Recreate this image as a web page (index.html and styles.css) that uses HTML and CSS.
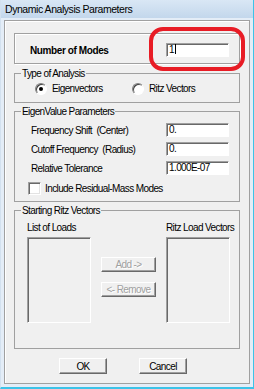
FILE: index.html
```html
<!DOCTYPE html>
<html>
  <head>
    <title>Dynamic Analysis Parameters</title>
    <link rel="stylesheet" href="styles.css">
  </head>
  <body>
    <div class="window">
      <div class="title-bar">Dynamic Analysis Parameters</div>
      <div class="client">
        <div class="frame">

          <div class="modes-box">
            <span class="modes-label">Number of Modes</span>
            <div class="field">1<span class="caret"></span></div>
          </div>

          <fieldset class="group">
            <legend>Type of Analysis</legend>
            <div class="radio-row">
              <label class="radio-item"><span class="radio checked"></span>Eigenvectors</label>
              <label class="radio-item"><span class="radio"></span>Ritz Vectors</label>
            </div>
          </fieldset>

          <fieldset class="group">
            <legend>EigenValue Parameters</legend>
            <div class="param-row">
              <span>Frequency Shift&nbsp; (Center)</span>
              <div class="field">0.</div>
            </div>
            <div class="param-row">
              <span>Cutoff Frequency&nbsp; (Radius)</span>
              <div class="field">0.</div>
            </div>
            <div class="param-row">
              <span>Relative Tolerance</span>
              <div class="field">1.000E-07</div>
            </div>
            <label class="check-row"><span class="checkbox"></span>Include Residual-Mass Modes</label>
          </fieldset>

          <fieldset class="group">
            <legend>Starting Ritz Vectors</legend>
            <div class="ritz-body">
              <div class="ritz-col">
                <span class="ritz-head">List of Loads</span>
                <div class="list"></div>
              </div>
              <div class="ritz-buttons">
                <button class="btn small" disabled>Add -&gt;</button>
                <button class="btn small" disabled>&lt;- Remove</button>
              </div>
              <div class="ritz-col">
                <span class="ritz-head">Ritz Load Vectors</span>
                <div class="list"></div>
              </div>
            </div>
          </fieldset>

          <div class="footer">
            <button class="btn main">OK</button>
            <button class="btn main">Cancel</button>
          </div>

        </div>
      </div>
      <div class="highlight"></div>
    </div>
  </body>
</html>
```
FILE: styles.css
```css
body{
  margin: 0;
  background-color: #f0f0f0;
  font-family: "Liberation Sans", Arial, sans-serif;
  font-size: 10px;
  letter-spacing: -0.6px;
  color: black;
}
.window{
  position: relative;
  width: 254px;
  height: 389px;
  box-sizing: border-box;
  background-color: #f0f0f0;
  border-left: 1px solid #d3e1ef;
  border-right: 1px solid #3cc3e8;
  border-bottom: 2px solid #3cc3e8;
}
.title-bar{
  height: 18px;
  line-height: 19px;
  padding-left: 4px;
  font-size: 10.5px;
  letter-spacing: -0.45px;
  background: linear-gradient(#d9e7f5, #c3d7ec);
}
.client{
  padding: 2px 3px 3px 3px;
  background-color: #e4edf7;
}
.frame{
  height: 364px;
  box-sizing: border-box;
  border: 1px solid #a0a0a0;
  box-shadow: inset 1px 1px 0 #fff;
  background-color: #f0f0f0;
  padding: 12px 9px 0 9px;
}

/* number of modes */
.modes-box{
  display: flex;
  align-items: center;
  justify-content: space-between;
  height: 31px;
  box-sizing: border-box;
  padding: 3px 10px 0 15px;
  border: 1px solid #a0a0a0;
  box-shadow: inset 1px 1px 0 #fff, 1px 1px 0 #fff;
}
.modes-label{
  font-weight: bold;
  letter-spacing: -0.4px;
}
.field{
  width: 63px;
  height: 14px;
  box-sizing: border-box;
  background-color: white;
  border: 1px solid;
  border-color: #a0a0a0 #fff #fff #a0a0a0;
  box-shadow: inset 1px 1px 0 #696969;
  padding-left: 2px;
  line-height: 12px;
  white-space: nowrap;
}
.caret{
  display: inline-block;
  width: 1px;
  height: 10px;
  margin-left: 1px;
  background-color: black;
  vertical-align: -1px;
}

/* group boxes */
.group{
  margin: 3px 0 0 0;
  padding: 0;
  border: 1px solid #a0a0a0;
  min-width: 0;
}
.group + .group{
  margin-top: 2px;
}
.group legend{
  margin-left: 6px;
  padding: 0 1px;
  line-height: 13px;
}

.radio-row{
  display: flex;
  align-items: center;
  height: 13px;
  margin: 2px 0 7px 20px;
}
.radio-item{
  display: flex;
  align-items: center;
  gap: 5px;
  width: 97px;
}
.radio{
  position: relative;
  width: 12px;
  height: 12px;
  box-sizing: border-box;
  border-radius: 50%;
  background-color: white;
  border: 1px solid;
  border-color: #808080 #fff #fff #808080;
  box-shadow: inset 1px 1px 0 #404040;
}
.radio.checked::after{
  content: "";
  position: absolute;
  left: 3px;
  top: 3px;
  width: 4px;
  height: 4px;
  border-radius: 50%;
  background-color: black;
}

.param-row{
  display: flex;
  align-items: center;
  justify-content: space-between;
  height: 14px;
  margin: 5px 10px 0 16px;
}
.check-row{
  display: flex;
  align-items: center;
  gap: 4px;
  height: 13px;
  margin: 7px 0 6px 13px;
}
.checkbox{
  width: 13px;
  height: 13px;
  box-sizing: border-box;
  background-color: white;
  border: 1px solid;
  border-color: #a0a0a0 #fff #fff #a0a0a0;
  box-shadow: inset 1px 1px 0 #696969, inset -1px -1px 0 #e3e3e3;
}

/* ritz vectors */
.ritz-body{
  display: flex;
  gap: 10px;
  margin: 4px 0 25px 12px;
}
.ritz-col{
  display: flex;
  flex-direction: column;
  gap: 3px;
}
.ritz-head{
  line-height: 13px;
  white-space: nowrap;
}
.list{
  width: 64px;
  height: 86px;
  box-sizing: border-box;
  border: 1px solid;
  border-color: #a0a0a0 #fff #fff #a0a0a0;
  box-shadow: inset 1px 1px 0 #696969;
  background-color: #f0f0f0;
}
.ritz-buttons{
  display: flex;
  flex-direction: column;
  gap: 10px;
  padding-top: 36px;
}

/* buttons */
.btn{
  font: inherit;
  letter-spacing: inherit;
  color: black;
  padding: 0;
  white-space: nowrap;
  background-color: #f0f0f0;
  border: 1px solid;
  border-color: #fff #696969 #696969 #fff;
  box-shadow: inset -1px -1px 0 #a0a0a0;
}
.btn.small{
  width: 55px;
  height: 15px;
  line-height: 12px;
  color: #a0a0a0;
  text-shadow: 1px 1px 0 #fff;
}
.btn.main{
  width: 48px;
  height: 16px;
  line-height: 13px;
}
.footer{
  display: flex;
  gap: 32px;
  margin: 9px 0 0 45px;
}

.highlight{
  position: absolute;
  left: 148px;
  top: 27px;
  width: 96px;
  height: 44px;
  box-sizing: border-box;
  border: 4px solid #e81c25;
  border-radius: 14px;
}
```
